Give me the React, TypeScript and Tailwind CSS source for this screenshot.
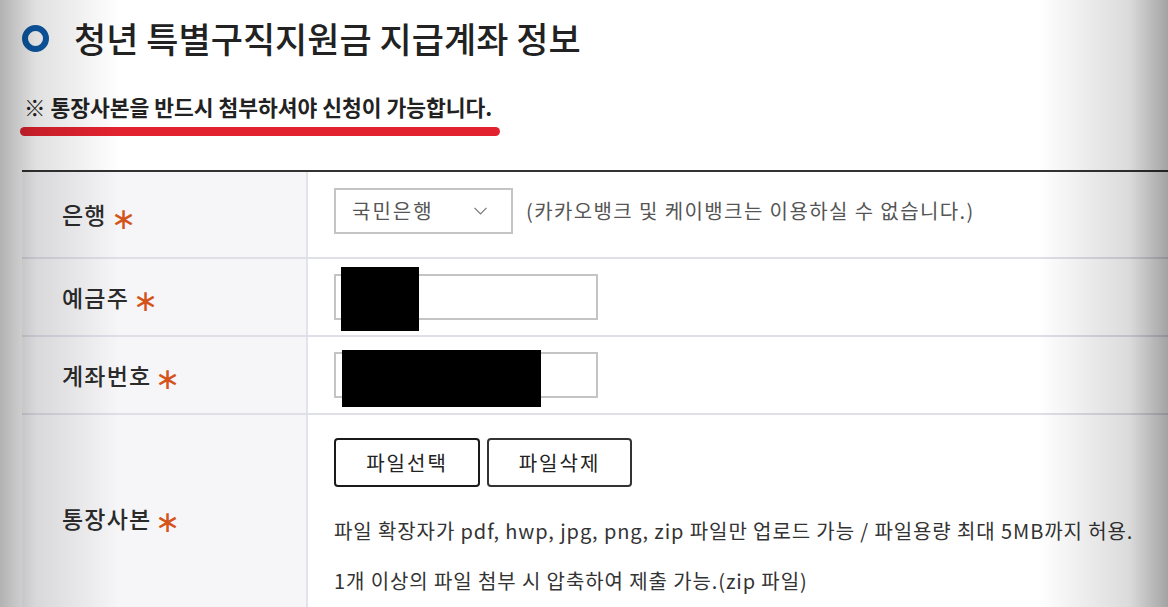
import React from "react";

const font = { fontFamily: '"Noto Sans CJK KR", "Noto Sans", sans-serif' };

function Label({ children }: { children: React.ReactNode }) {
  return (
    <div className="w-[286px] shrink-0 bg-[#f6f6f8] border-r-2 border-[#e3e3ea] flex items-center pl-[40px] text-[23px] tracking-[1.2px] font-medium text-[#2b2b2b]">
      {children}
      <span className="ml-[4px] text-[30px] leading-none text-[#d4541c] translate-y-[1px]">∗</span>
    </div>
  );
}

export default function App() {
  return (
    <div className="relative h-[607px] w-[1168px] overflow-hidden bg-white" style={font}>
      <div className="pl-[22px] pt-[14px]">
        <div className="flex items-center h-[48px]">
          <div className="w-[27px] h-[27px] rounded-full border-[6px] border-[#0c5aa6]" />
          <h1 className="ml-[25px] text-[35px] font-medium text-[#222]">청년 특별구직지원금 지급계좌 정보</h1>
        </div>
        <div className="mt-[31px] inline-flex flex-col">
          <p className="pl-[2px] text-[21.5px] font-bold text-[#222] leading-[28px]">
            <span className="font-normal">※</span> 통장사본을 반드시 첨부하셔야 신청이 가능합니다.
          </p>
          <div className="mt-[6px] ml-[-2px] w-[480px] h-[9px] rounded-full bg-[#e2232f]" />
        </div>
      </div>

      <div className="ml-[22px] mt-[34px] border-t-2 border-[#333]">
        <div className="flex h-[87px] border-b-2 border-[#dfdfe8]">
          <Label>은행</Label>
          <div className="flex items-center pl-[26px] pb-[8px]">
            <div className="w-[179px] h-[46px] border-2 border-[#c4c4c4] flex items-center justify-between pl-[16px] pr-[24px] text-[20px] tracking-[2px] text-[#555]">
              <span>국민은행</span>
              <svg width="13" height="8" viewBox="0 0 13 8" fill="none">
                <path d="M0.5 0.8l6 6 6-6" stroke="#777" strokeWidth="1.2" />
              </svg>
            </div>
            <span className="ml-[13px] text-[20px] text-[#555] tracking-[1.4px]">(카카오뱅크 및 케이뱅크는 이용하실 수 없습니다.)</span>
          </div>
        </div>
        <div className="flex h-[78px] border-b-2 border-[#dfdfe8]">
          <Label>예금주</Label>
          <div className="flex items-center pl-[26px]">
            <div className="relative w-[264px] h-[46px] border-2 border-[#c4c4c4]">
              <div className="absolute left-[5px] top-[-9px] w-[78px] h-[64px] bg-black" />
            </div>
          </div>
        </div>
        <div className="flex h-[78px] border-b-2 border-[#dfdfe8]">
          <Label>계좌번호</Label>
          <div className="flex items-center pl-[26px]">
            <div className="relative w-[264px] h-[46px] border-2 border-[#c4c4c4]">
              <div className="absolute left-[6px] top-[-4px] w-[199px] h-[57px] bg-black" />
            </div>
          </div>
        </div>
        <div className="flex h-[206px]">
          <Label>통장사본</Label>
          <div className="pl-[26px] pt-[23px]">
            <div className="flex gap-[7px]">
              <button className="w-[146px] h-[49px] border-2 border-[#1a1a1a] rounded-[4px] text-[20px] tracking-[2px] text-[#222]">파일선택</button>
              <button className="w-[145px] h-[49px] border-2 border-[#333] rounded-[4px] text-[20px] tracking-[2px] text-[#222]">파일삭제</button>
            </div>
            <div className="mt-[19px] text-[20px] leading-[50px] text-[#333] tracking-[0.9px]">
              <p>파일 확장자가 pdf, hwp, jpg, png, zip 파일만 업로드 가능 / 파일용량 최대 5MB까지 허용.</p>
              <p>1개 이상의 파일 첨부 시 압축하여 제출 가능.(zip 파일)</p>
            </div>
          </div>
        </div>
      </div>

      <div className="pointer-events-none absolute inset-y-0 left-0 w-[120px] bg-[linear-gradient(to_right,rgba(0,0,0,0.3),rgba(0,0,0,0.12)_30%,rgba(0,0,0,0))]" />
      <div className="pointer-events-none absolute inset-y-0 right-0 w-[130px] bg-[linear-gradient(to_left,rgba(0,0,0,0.36),rgba(0,0,0,0.14)_30%,rgba(0,0,0,0))]" />
    </div>
  );
}
